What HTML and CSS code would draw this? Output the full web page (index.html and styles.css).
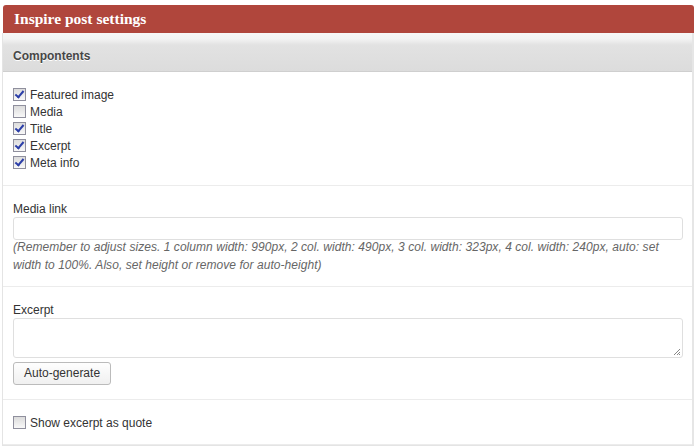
FILE: index.html
```html
<!DOCTYPE html>
<html>
<head>
<meta charset="utf-8">
<link rel="stylesheet" href="styles.css">
</head>
<body>
<div class="panel">
  <div class="title">Inspire post settings</div>
  <div class="box">
    <div class="subhead">Compontents</div>
    <div class="section checks">
      <label class="check"><span class="cb on"></span>Featured image</label>
      <label class="check"><span class="cb"></span>Media</label>
      <label class="check"><span class="cb on"></span>Title</label>
      <label class="check"><span class="cb on"></span>Excerpt</label>
      <label class="check"><span class="cb on"></span>Meta info</label>
    </div>
    <div class="section field media">
      <div class="label">Media link</div>
      <div class="input"></div>
      <div class="help">(Remember to adjust sizes. 1 column width: 990px, 2 col. width: 490px, 3 col. width: 323px, 4 col. width: 240px, auto: set width to 100%. Also, set height or remove for auto-height)</div>
    </div>
    <div class="section field">
      <div class="label">Excerpt</div>
      <div class="textarea"><svg class="grip" width="8" height="8" viewBox="0 0 8 8"><path d="M7 1L1 7M7 4L4 7M7 6L6 7" stroke="#888" stroke-width="1" fill="none"/></svg></div>
      <div class="btn">Auto-generate</div>
    </div>
    <div class="section last">
      <label class="check"><span class="cb"></span>Show excerpt as quote</label>
    </div>
  </div>
</div>
</body>
</html>
```
FILE: styles.css
```css
html, body { margin: 0; padding: 0; background: #fff; }
body { padding: 5px 4px 0 2px; font-family: "Liberation Sans", Arial, sans-serif; font-size: 12px; color: #333; }
.panel { width: 692px; }
.title {
  margin-left: 1px;
  background: #b0463c;
  color: #fff;
  font-family: "Liberation Serif", Georgia, serif;
  font-size: 15.5px;
  font-weight: bold;
  height: 28px;
  line-height: 28px;
  padding-left: 11px;
  border-radius: 3px 3px 0 0;
}
.box {
  border: 1px solid #e4e4e4;
  border-top: none;
  border-right: 2px solid #e6e6e6;
}
.subhead {
  height: 38px;
  line-height: 47px;
  padding-left: 10px;
  background: linear-gradient(#f7f7f7 0, #f3f3f3 6px, #e2e2e2 12px, #dcdcdc 100%);
  border-bottom: 1px solid #cfcfcf;
  font-weight: bold;
  color: #464646;
  text-shadow: 0 1px 0 #fff;
}
.section { border-bottom: 1px solid #ececec; padding: 0 10px; }
.checks { padding-top: 14px; padding-bottom: 14px; }
.check { display: flex; align-items: center; height: 17px; color: #333; }
.cb {
  width: 11px; height: 11px;
  border: 1px solid #8f8f9d;
  background: linear-gradient(#dcdcdc, #f8f8f8);
  margin-right: 4px;
  position: relative;
  flex: none;
}
.cb.on::after {
  content: "";
  position: absolute;
  left: 3px; top: 0px;
  width: 3px; height: 7px;
  border: solid #2b3ea8;
  border-width: 0 2px 2px 0;
  transform: rotate(40deg);
}
.field { padding-top: 15px; padding-bottom: 13px; }
.media { padding-bottom: 12px; }
.label { line-height: 16px; margin-bottom: 0; }
.input {
  height: 21px;
  border: 1px solid #dfdfdf;
  border-radius: 3px;
  width: 668px;
  background: #fff;
}
.help { font-style: italic; color: #666; line-height: 18px; margin-top: -2px; letter-spacing: 0.05px; }
.textarea {
  height: 38px;
  border: 1px solid #dfdfdf;
  border-radius: 3px;
  width: 668px;
  position: relative;
}
.grip { position: absolute; right: 1px; bottom: 1px; }
.btn {
  display: inline-block;
  margin-top: 4px;
  height: 21px;
  line-height: 21px;
  padding: 0 10px;
  border: 1px solid #bbb;
  border-radius: 3px;
  background: linear-gradient(#fefefe, #f0f0f0);
  color: #333;
  margin-bottom: 1px;
}
.last { padding-top: 14px; padding-bottom: 13px; }
```
